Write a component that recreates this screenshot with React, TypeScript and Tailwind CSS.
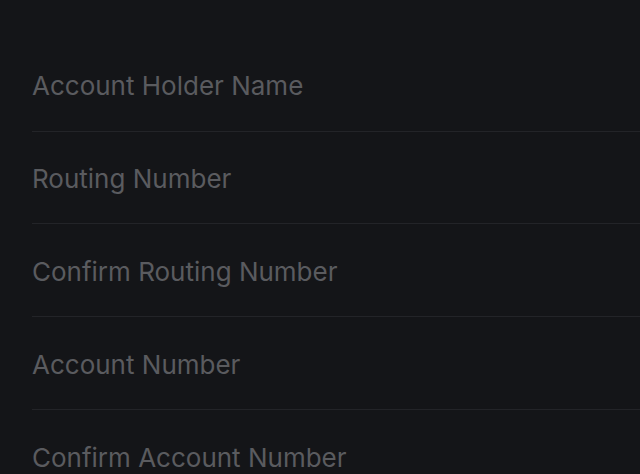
export default function App() {
  const rows = [
    { label: "Account Holder Name", h: "h-[92px]", p: "pt-[1px]" },
    { label: "Routing Number", h: "h-[92px]", p: "pt-[2px]" },
    { label: "Confirm Routing Number", h: "h-[93px]", p: "pt-[4px]" },
    { label: "Account Number", h: "h-[93px]", p: "pt-[4px]" },
    { label: "Confirm Account Number", h: "h-[93px]", p: "pt-[2px]" },
  ];
  return (
    <div
      className="w-[640px] h-[474px] overflow-hidden bg-[#141518] pt-[40px] pl-8"
      style={{ fontFamily: "Inter, 'Noto Sans', sans-serif" }}
    >
      {rows.map((r, i) => (
        <div
          key={r.label}
          className={`${r.h} ${r.p} flex items-center ${i < rows.length - 1 ? "border-b border-[#232428]" : ""}`}
        >
          <span className="text-[26px] leading-none text-[#5a5b5f]">{r.label}</span>
        </div>
      ))}
    </div>
  );
}
